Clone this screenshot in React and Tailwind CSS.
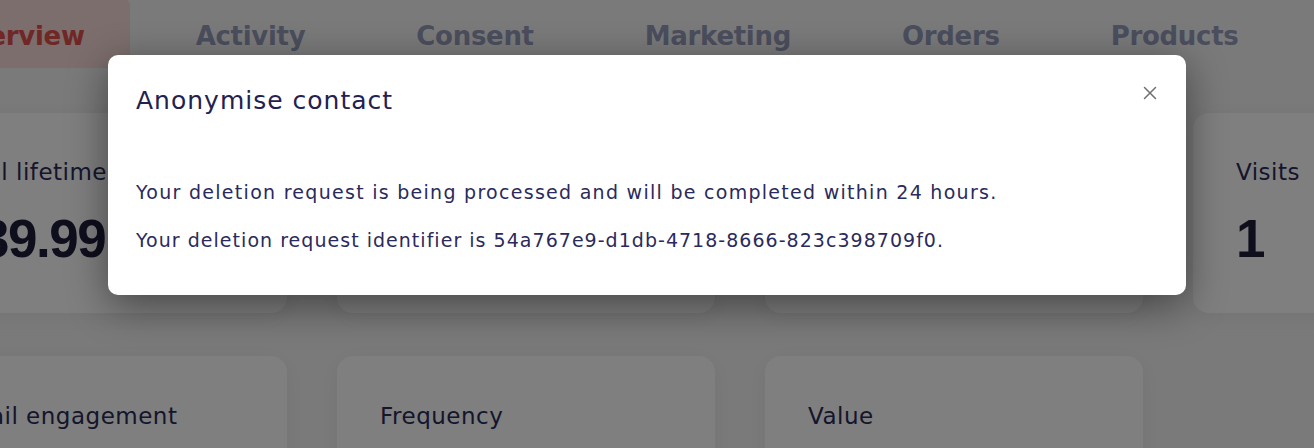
const tabs = ["Overview", "Activity", "Consent", "Marketing", "Orders", "Products"];

const topCards = [
  { title: "Total lifetime value", value: "£39.99" },
  { title: "Average order value", value: "£39.99" },
  { title: "Orders", value: "1" },
  { title: "Visits", value: "1" },
];

const bottomCards = ["Email engagement", "Frequency", "Value", "Recency"];

const Card = ({ children, className = "" }) => (
  <div
    className={`w-[378px] shrink-0 rounded-2xl bg-white shadow-[0_4px_24px_rgba(0,0,0,0.06)] px-[43px] ${className}`}
  >
    {children}
  </div>
);

const App = () => {
  return (
    <div
      className="relative h-[448px] w-[1314px] overflow-hidden bg-[#f5f5f6]"
      style={{ fontFamily: '"DejaVu Sans", sans-serif' }}
    >
      <div className="-ml-[91px] flex flex-col">
        {/* tabs */}
        <div className="-ml-[4px] flex h-[68px] gap-[21px]">
          {tabs.map((t, i) => (
            <div
              key={t}
              className={`flex h-[70px] -mt-[2px] items-center rounded-lg px-[45px] pt-[6px] text-[26px] font-semibold tracking-[-0.3px] ${
                i === 0 ? "bg-[#f8dcdb] text-[#e0504e]" : "text-[#979dba]"
              }`}
            >
              {t}
            </div>
          ))}
        </div>

        {/* top stats */}
        <div className="mt-[45px] flex gap-[50px]">
          {topCards.map((c) => (
            <Card key={c.title} className="h-[200px] pt-[44px]">
              <div className="text-[23px] leading-[30px] tracking-[0.5px] text-[#2b2b57]">{c.title}</div>
              <div className="mt-[22px] font-['Liberation_Sans',sans-serif] text-[53px] font-bold leading-[60px] tracking-[-1.5px] text-[#1c1c3a]">
                {c.value}
              </div>
            </Card>
          ))}
        </div>

        {/* bottom cards */}
        <div className="mt-[43px] flex gap-[50px]">
          {bottomCards.map((c, i) => (
            <Card key={c} className={`h-[200px] pt-[45px] ${i === 3 ? "invisible" : ""}`}>
              <div className="text-[23px] leading-[30px] tracking-[0.5px] text-[#2b2b57]">{c}</div>
            </Card>
          ))}
        </div>
      </div>

      {/* dim layer */}
      <div className="absolute inset-0 bg-black/50" />

      {/* modal */}
      <div className="absolute left-[108px] top-[55px] h-[240px] w-[1078px] rounded-[10px] bg-white px-[28px] shadow-[0_10px_40px_rgba(0,0,0,0.45)]">
        <div className="flex items-start justify-between pt-[29px]">
          <h2 className="text-[25px] leading-[34px] tracking-[1px] text-[#23214f]">Anonymise contact</h2>
          <button className="mr-0 mt-[1px] text-[#6f6f6f]">
            <svg width="16" height="16" viewBox="0 0 16 16" fill="none" stroke="currentColor" strokeWidth="1.5" strokeLinecap="round">
              <path d="M2.5 2.5l11 11M13.5 2.5l-11 11" />
            </svg>
          </button>
        </div>
        <div className="mt-[62px] flex flex-col gap-[23px] text-[19px] leading-[25px] text-[#2b2a5c]">
          <p className="tracking-[1.28px]">Your deletion request is being processed and will be completed within 24 hours.</p>
          <p className="tracking-[1.03px]">Your deletion request identifier is 54a767e9-d1db-4718-8666-823c398709f0.</p>
        </div>
      </div>
    </div>
  );
};

export default App;
